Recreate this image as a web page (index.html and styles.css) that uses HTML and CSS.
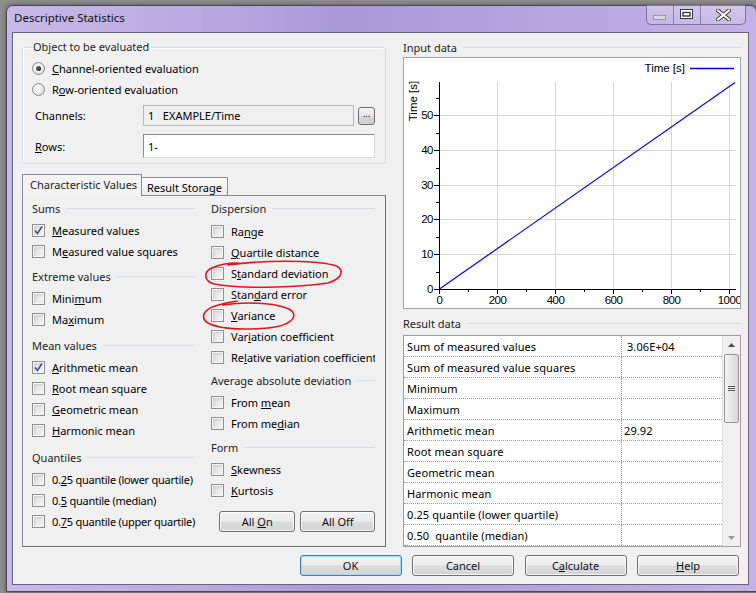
FILE: index.html
```html
<!DOCTYPE html>
<html>
<head>
<meta charset="utf-8">
<title>Descriptive Statistics</title>
<link rel="stylesheet" href="styles.css">
</head>
<body>
<div class="window">
  <div class="titlebar">
    <span class="title">Descriptive Statistics</span>
    <div class="caption">
      <div class="cbtn cmin"><svg width="14" height="6" viewBox="0 0 14 6"><rect x="0.5" y="0.5" width="12" height="4" fill="#d8d4e6" stroke="#9c96b4"/></svg></div>
      <div class="cbtn cmax"><svg width="14" height="11" viewBox="0 0 14 11"><rect x="0.5" y="0.5" width="12" height="9" fill="#fff" stroke="#3a3a46"/><rect x="3" y="3.5" width="7" height="3.5" fill="none" stroke="#3a3a46" stroke-width="1.4"/></svg></div>
      <div class="cbtn cclose"><svg width="15" height="12" viewBox="0 0 15 12"><path d="M2 1.5 L13 10.5 M13 1.5 L2 10.5" stroke="#3a3a46" stroke-width="4" stroke-linecap="square"/><path d="M2 1.5 L13 10.5 M13 1.5 L2 10.5" stroke="#fff" stroke-width="2" stroke-linecap="square"/></svg></div>
    </div>
  </div>
  <div class="client">
    <div class="main">
      <div class="left">
        <fieldset class="group">
          <legend>Object to be evaluated</legend>
          <div class="opt first"><span class="radio on"></span><span><u>C</u>hannel-oriented evaluation</span></div>
          <div class="opt"><span class="radio"></span><span>R<u>o</u>w-oriented evaluation</span></div>
          <div class="frow chan"><span class="flabel">Channels:</span><div class="field ro">1&nbsp;&nbsp;&nbsp;EXAMPLE/Time</div><div class="dots">...</div></div>
          <div class="frow rows"><span class="flabel"><u>R</u>ows:</span><div class="field wide">1-</div></div>
        </fieldset>
        <div class="tabs">
          <div class="tab active">Characteristic Values</div>
          <div class="tab">Result Storage</div>
        </div>
        <div class="panel">
          <div class="col lc">
            <div class="sec-h">Sums</div>
            <div class="cb"><span class="box checked"><svg width="11" height="11" viewBox="0 0 11 11"><path d="M2 5.5 L4.5 8.5 L9 1.5" fill="none" stroke="#3b5296" stroke-width="1.6"/></svg></span><span><u>M</u>easured values</span></div>
            <div class="cb"><span class="box"></span><span>M<u>e</u>asured value squares</span></div>
            <div class="sec-h g3">Extreme values</div>
            <div class="cb"><span class="box"></span><span>Mini<u>m</u>um</span></div>
            <div class="cb"><span class="box"></span><span>Ma<u>x</u>imum</span></div>
            <div class="sec-h g4">Mean values</div>
            <div class="cb"><span class="box checked"><svg width="11" height="11" viewBox="0 0 11 11"><path d="M2 5.5 L4.5 8.5 L9 1.5" fill="none" stroke="#3b5296" stroke-width="1.6"/></svg></span><span><u>A</u>rithmetic mean</span></div>
            <div class="cb"><span class="box"></span><span><u>R</u>oot mean square</span></div>
            <div class="cb"><span class="box"></span><span><u>G</u>eometric mean</span></div>
            <div class="cb"><span class="box"></span><span><u>H</u>armonic mean</span></div>
            <div class="sec-h g5">Quantiles</div>
            <div class="cb"><span class="box"></span><span class="tight">0.<u>2</u>5 quantile (lower quartile)</span></div>
            <div class="cb"><span class="box"></span><span class="tight">0.<u>5</u> quantile (median)</span></div>
            <div class="cb"><span class="box"></span><span class="tight">0.<u>7</u>5 quantile (upper quartile)</span></div>
          </div>
          <div class="col rc">
            <div class="sec-h">Dispersion</div>
            <div class="cb"><span class="box"></span><span>Ra<u>n</u>ge</span></div>
            <div class="cb"><span class="box"></span><span><u>Q</u>uartile distance</span></div>
            <div class="cb"><span class="box"></span><span>S<u>t</u>andard deviation</span></div>
            <div class="cb"><span class="box"></span><span>Stan<u>d</u>ard error</span></div>
            <div class="cb"><span class="box"></span><span><u>V</u>ariance</span></div>
            <div class="cb"><span class="box"></span><span>Var<u>i</u>ation coefficient</span></div>
            <div class="cb clip"><span class="box"></span><span>Re<u>l</u>ative variation coefficient</span></div>
            <div class="sec-h g1">Average absolute deviation</div>
            <div class="cb"><span class="box"></span><span>From <u>m</u>ean</span></div>
            <div class="cb"><span class="box"></span><span>From me<u>d</u>ian</span></div>
            <div class="sec-h g2">Form</div>
            <div class="cb"><span class="box"></span><span><u>S</u>kewness</span></div>
            <div class="cb"><span class="box"></span><span><u>K</u>urtosis</span></div>
            <div class="allbtns">
              <div class="btn allon"><span>All <u>O</u>n</span></div>
              <div class="btn alloff"><span>All Of<u>f</u></span></div>
            </div>
          </div>
          <svg class="marks" width="364" height="352" viewBox="0 0 364 352">
            <path d="M205 69 C240 64 290 64 310 69 C322 72 321 82 305 87 C270 92 215 93 191 88 C181 85 180 76 189 72 C197 68 206 67 215 67" fill="none" stroke="#e8141b" stroke-width="1.6" stroke-linecap="round"/>
            <path d="M200 109 C225 105 258 107 269 115 C275 122 266 130 245 132 C220 134 196 133 185 127 C177 122 180 114 192 110 C198 108 206 106 214 105" fill="none" stroke="#e8141b" stroke-width="1.6" stroke-linecap="round"/>
          </svg>
        </div>
      </div>
      <div class="right">
        <div class="head">Input data</div>
        <div class="chart">
          <svg width="336" height="250" viewBox="0 0 336 250">
            <g stroke="#d6d6d6" stroke-width="1">
              <line x1="93.5" y1="24" x2="93.5" y2="231"/>
              <line x1="151.5" y1="24" x2="151.5" y2="231"/>
              <line x1="209.5" y1="24" x2="209.5" y2="231"/>
              <line x1="267.5" y1="24" x2="267.5" y2="231"/>
              <line x1="325.5" y1="24" x2="325.5" y2="231"/>
              <line x1="36" y1="196.5" x2="332" y2="196.5"/>
              <line x1="36" y1="161.5" x2="332" y2="161.5"/>
              <line x1="36" y1="127.5" x2="332" y2="127.5"/>
              <line x1="36" y1="92.5" x2="332" y2="92.5"/>
              <line x1="36" y1="57.5" x2="332" y2="57.5"/>
            </g>
            <g stroke="#000" stroke-width="1">
              <line x1="35.5" y1="24" x2="35.5" y2="232"/>
              <line x1="35" y1="231.5" x2="332" y2="231.5"/>
              <line x1="30" y1="231.5" x2="35" y2="231.5"/>
              <line x1="30" y1="196.5" x2="35" y2="196.5"/>
              <line x1="30" y1="161.5" x2="35" y2="161.5"/>
              <line x1="30" y1="127.5" x2="35" y2="127.5"/>
              <line x1="30" y1="92.5" x2="35" y2="92.5"/>
              <line x1="30" y1="57.5" x2="35" y2="57.5"/>
              <line x1="32" y1="214.5" x2="35" y2="214.5"/>
              <line x1="32" y1="179.5" x2="35" y2="179.5"/>
              <line x1="32" y1="144.5" x2="35" y2="144.5"/>
              <line x1="32" y1="110.5" x2="35" y2="110.5"/>
              <line x1="32" y1="75.5" x2="35" y2="75.5"/>
              <line x1="32" y1="40.5" x2="35" y2="40.5"/>
              <line x1="93.5" y1="231" x2="93.5" y2="236"/>
              <line x1="151.5" y1="231" x2="151.5" y2="236"/>
              <line x1="209.5" y1="231" x2="209.5" y2="236"/>
              <line x1="267.5" y1="231" x2="267.5" y2="236"/>
              <line x1="325.5" y1="231" x2="325.5" y2="236"/>
              <line x1="35.5" y1="231" x2="35.5" y2="236"/>
              <line x1="64.5" y1="231" x2="64.5" y2="234"/>
              <line x1="122.5" y1="231" x2="122.5" y2="234"/>
              <line x1="180.5" y1="231" x2="180.5" y2="234"/>
              <line x1="238.5" y1="231" x2="238.5" y2="234"/>
              <line x1="296.5" y1="231" x2="296.5" y2="234"/>
            </g>
            <line x1="35.5" y1="231" x2="331" y2="24.5" stroke="#0000f0" stroke-width="1.2"/>
            <line x1="286" y1="10.5" x2="330" y2="10.5" stroke="#0000f0" stroke-width="1.5"/>
            <g class="ax" text-anchor="end">
              <text x="29" y="235">0</text>
              <text x="29" y="200">10</text>
              <text x="29" y="165">20</text>
              <text x="29" y="131">30</text>
              <text x="29" y="96">40</text>
              <text x="29" y="61">50</text>
              <text class="lg" x="281" y="14">Time [s]</text>
            </g>
            <g class="ax" text-anchor="middle">
              <text x="35.5" y="246">0</text>
              <text x="93.5" y="246">200</text>
              <text x="151.5" y="246">400</text>
              <text x="209.5" y="246">600</text>
              <text x="267.5" y="246">800</text>
              <text x="325.5" y="246">1000</text>
              <text class="lg" transform="translate(13,43) rotate(-90)">Time [s]</text>
            </g>
          </svg>
        </div>
        <div class="head res">Result data</div>
        <div class="table">
          <div class="tbody">
            <div class="tr"><div class="td">Sum of measured values</div><div class="td v">&nbsp;3.06E+04</div></div>
            <div class="tr"><div class="td">Sum of measured value squares</div><div class="td v"></div></div>
            <div class="tr"><div class="td">Minimum</div><div class="td v"></div></div>
            <div class="tr"><div class="td">Maximum</div><div class="td v"></div></div>
            <div class="tr"><div class="td">Arithmetic mean</div><div class="td v">29.92</div></div>
            <div class="tr"><div class="td">Root mean square</div><div class="td v"></div></div>
            <div class="tr"><div class="td">Geometric mean</div><div class="td v"></div></div>
            <div class="tr"><div class="td">Harmonic mean</div><div class="td v"></div></div>
            <div class="tr"><div class="td">0.25 quantile (lower quartile)</div><div class="td v"></div></div>
            <div class="tr"><div class="td">0.50&nbsp; quantile (median)</div><div class="td v"></div></div>
          </div>
          <div class="sb">
            <div class="sb-arrow"><svg width="7" height="4" viewBox="0 0 7 4"><path d="M0 4 L3.5 0 L7 4 Z" fill="#4d4d4d"/></svg></div>
            <div class="sb-thumb"><i></i><i></i><i></i></div>
            <div class="sb-space"></div>
            <div class="sb-arrow"><svg width="7" height="4" viewBox="0 0 7 4"><path d="M0 0 L3.5 4 L7 0 Z" fill="#9a9a9a"/></svg></div>
          </div>
        </div>
      </div>
    </div>
    <div class="footer">
      <div class="btn big ok"><span>OK</span></div>
      <div class="btn big"><span>Cancel</span></div>
      <div class="btn big"><span>C<u>a</u>lculate</span></div>
      <div class="btn big"><span><u>H</u>elp</span></div>
    </div>
  </div>
</div>
</body>
</html>
```
FILE: styles.css
```css
* { box-sizing: border-box; }
html, body { margin: 0; height: 100%; }
body {
  background: #8e8e8e;
  font-family: "Noto Sans", "DejaVu Sans", sans-serif;
  font-size: 11px;
  line-height: 15px;
  color: #000;
  overflow: hidden;
}
u { text-decoration: underline; text-underline-offset: 1px; }

.window {
  margin: 5px 0 0 6px;
  width: 751px;
  height: 587px;
  border: 1px solid #4c4858;
  border-radius: 7px 7px 0 0;
  background: linear-gradient(90deg, #c7b9e7 0%, #bba9e1 25%, #a999d7 45%, #b2a1dc 65%, #bcabe2 85%, #c2b2e5 100%);
  padding: 0 7px 6px 5px;
  display: flex;
  flex-direction: column;
  box-shadow: 0 0 5px rgba(0,0,0,.45);
}
.titlebar {
  height: 26px;
  display: flex;
  align-items: flex-start;
}
.title {
  font-size: 11.5px;
  line-height: 16px;
  margin: 4px 0 0 2px;
  color: #111;
}
.caption {
  margin: -1px 3px 0 auto;
  height: 20px;
  display: flex;
  border: 1px solid rgba(60,50,95,.55);
  border-top: none;
  border-radius: 0 0 5px 5px;
  background: linear-gradient(rgba(255,255,255,.3), rgba(255,255,255,.12));
  overflow: hidden;
}
.cbtn {
  display: flex;
  align-items: center;
  justify-content: center;
  height: 100%;
}
.cmin { width: 27px; border-right: 1px solid rgba(60,50,95,.45); padding-top: 6px; }
.cmax { width: 27px; border-right: 1px solid rgba(60,50,95,.45); }
.cclose { width: 44px; }

.client {
  flex: 1;
  background: #f0f0f0;
  border: 1px solid #68637c;
  padding: 6px 7px 0 9px;
  display: flex;
  flex-direction: column;
}
.main { display: flex; gap: 17px; }
.left { width: 364px; display: flex; flex-direction: column; }
.right { width: 338px; display: flex; flex-direction: column; }

/* group box */
.group {
  margin: 0;
  padding: 0 9px 5px 9px;
  border: 1px solid #d5dfe5;
  border-radius: 3px;
  box-shadow: inset 1px 1px 0 #fff;
}
.group legend {
  padding: 0 2px 0 1px;
  line-height: 16px;
  color: #1e1e1e;
}
.opt { display: flex; align-items: center; height: 21px; }
.opt.first { margin-top: 3px; }
.radio {
  width: 13px; height: 13px;
  border-radius: 50%;
  border: 1px solid #8a8a8a;
  background: radial-gradient(circle at 40% 40%, #ffffff 0%, #e6e6e6 60%, #cfcfcf 100%);
  margin-right: 7px;
  flex: none;
  display: flex;
  align-items: center;
  justify-content: center;
}
.radio.on::after {
  content: "";
  width: 5px; height: 5px;
  border-radius: 50%;
  background: radial-gradient(circle at 35% 35%, #6a6a6a, #141414);
}
.frow { display: flex; align-items: center; }
.frow.chan { margin-top: 5px; height: 21px; }
.frow.rows { margin-top: 8px; height: 24px; }
.flabel { width: 111px; padding-left: 3px; flex: none; }
.field {
  height: 100%;
  border: 1px solid #c4c4c4;
  border-top-color: #acacac;
  padding-left: 4px;
  display: flex;
  align-items: center;
}
.field.ro { width: 211px; background: #f0f0f0; border-color: #b8b8b8; }
.field.wide { width: 232px; background: #fff; border-color: #dcdcdc; border-top-color: #8c8c8c; border-left-color: #8c8c8c; }
.dots {
  margin-left: 4px;
  width: 17px; height: 18px;
  border: 1px solid #707070;
  border-radius: 3px;
  background: linear-gradient(#f4f4f4, #e4e4e4 50%, #d8d8d8 50%, #d0d0d0);
  font-size: 9px;
  line-height: 12px;
  text-align: center;
}

/* tabs */
.tabs {
  display: flex;
  align-items: flex-end;
  margin-top: 10px;
  height: 21px;
  position: relative;
  z-index: 1;
}
.tab {
  border: 1px solid #898c95;
  border-bottom: none;
  white-space: nowrap;
}
.tab.active {
  width: 120px;
  height: 22px;
  margin-bottom: -1px;
  background: #f3f3f3;
  padding: 2px 0 0 7px;
  color: #1e1e1e;
}
.tab:not(.active) {
  width: 86px;
  height: 18px;
  border-left: none;
  background: linear-gradient(#fdfdfd, #ececec);
  padding: 2px 0 0 5px;
}
.panel {
  position: relative;
  height: 352px;
  border: 1px solid #898c95;
  border-right-color: #6d6d6d;
  border-bottom-color: #6d6d6d;
  background: #f0f0f0;
  padding: 1px 10px 0 9px;
  display: grid;
  grid-template-columns: 163px 164px;
  column-gap: 16px;
  align-content: start;
}
.col { display: flex; flex-direction: column; }
.sec-h {
  height: 22px;
  display: flex;
  align-items: center;
  white-space: nowrap;
  color: #1e1e1e;
}
.sec-h::after {
  content: "";
  flex: 1;
  height: 1px;
  margin-left: 6px;
  background: #d5dfe5;
}
.sec-h + .cb { margin-top: 1px; }
.rc .sec-h:first-child + .cb { margin-top: 2px; }
.sec-h.g1 { margin-top: 1px; }
.sec-h.g2 { margin-top: 2px; }
.sec-h.g3 { margin-top: 3px; }
.sec-h.g4 { margin-top: 4px; }
.sec-h.g5 { margin-top: 5px; }
.cb {
  height: 21px;
  display: flex;
  align-items: center;
  white-space: nowrap;
}
.cb.clip { overflow: hidden; }
.tight { letter-spacing: -0.25px; }
.box {
  width: 13px; height: 13px;
  flex: none;
  margin-right: 7px;
  border: 1px solid #8e8f8f;
  background: linear-gradient(135deg, #d9d9d9, #f7f7f7);
  box-shadow: inset 0 0 0 1px #f6f6f6, inset 1px 1px 2px 1px #cfcfcf;
  display: flex;
  align-items: center;
  justify-content: center;
}
.allbtns {
  margin: 10px 0 0 8px;
  display: flex;
  gap: 5px;
}
.btn {
  height: 21px;
  border: 1px solid #707070;
  border-radius: 3px;
  background: linear-gradient(#f3f3f3 0%, #ebebeb 48%, #dddddd 52%, #d3d3d3 100%);
  box-shadow: inset 0 0 0 1px rgba(255,255,255,.75);
  display: flex;
  align-items: center;
  justify-content: center;
  color: #111;
  white-space: nowrap;
}
.allon { width: 78px; }
.alloff { width: 76px; }
.marks {
  position: absolute;
  left: 0;
  top: 0;
  pointer-events: none;
  overflow: visible;
}

/* right side */
.head {
  height: 16px;
  display: flex;
  align-items: center;
  white-space: nowrap;
  color: #1e1e1e;
}
.head::after {
  content: "";
  flex: 1;
  height: 1px;
  margin: 0 -1px 0 6px;
  background: #d5dfe5;
}
.chart {
  margin-top: 2px;
  height: 252px;
  border: 1px solid #a5a5a5;
  background: #fff;
}
.chart svg { display: block; }
.ax text {
  font-family: "Liberation Sans", Arial, sans-serif;
  font-size: 11.5px;
  letter-spacing: -0.5px;
  fill: #000;
}
.ax text.lg { letter-spacing: 0; }
.head.res { margin-top: 6px; }
.table {
  margin-top: 4px;
  height: 212px;
  border: 1px solid #a0a0a0;
  background: #fff;
  display: flex;
}
.tbody { flex: 1; }
.tr {
  display: grid;
  grid-template-columns: 218px 1fr;
  height: 21px;
  border-bottom: 1px dotted #9a9a9a;
}
.td {
  padding-left: 3px;
  display: flex;
  align-items: center;
  white-space: nowrap;
  overflow: hidden;
  letter-spacing: 0.1px;
}
.td:first-child { border-right: 1px dotted #9a9a9a; }
.td.v { padding-left: 2px; }
.sb {
  width: 18px;
  background: #f0f0f0;
  border-left: 1px solid #e4e4e4;
  display: flex;
  flex-direction: column;
}
.sb-arrow {
  height: 17px;
  display: flex;
  align-items: center;
  justify-content: center;
}
.sb-thumb {
  margin: 1px 1px 0 1px;
  height: 69px;
  border: 1px solid #979797;
  border-radius: 2px;
  background: linear-gradient(90deg, #f5f5f5, #e6e6e6 50%, #d8d8d8);
  display: flex;
  flex-direction: column;
  align-items: center;
  justify-content: center;
  gap: 1px;
}
.sb-thumb i { display: block; width: 7px; height: 1px; background: #5e5e5e; }
.sb-space { flex: 1; }

.footer {
  margin-top: 8px;
  display: flex;
  justify-content: flex-end;
  gap: 10.5px;
  padding-right: 2px;
}
.btn.big { width: 102px; }
.btn.ok {
  border-color: #3c7fb1;
  box-shadow: inset 0 0 0 1px #9ee0fb;
}
```
